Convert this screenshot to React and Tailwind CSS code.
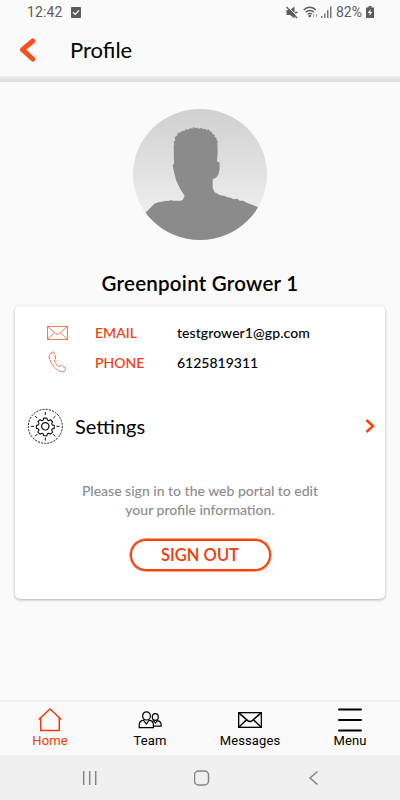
const tabs = [
    { name: 'Home', icon: HomeIcon, active: true },
    { name: 'Team', icon: TeamIcon },
    { name: 'Messages', icon: MessagesIcon },
    { name: 'Menu', icon: MenuIcon },
];

export default function App() {
    return (
        <div className="w-[400px] h-[800px] flex flex-col overflow-hidden bg-[#fafafa] text-black font-['Lato',sans-serif]">
            <StatusBar />
            <Header />
            <main className="flex-1 flex flex-col items-center px-[15px] pt-[27px]">
                <Avatar />
                <h1 className="mt-[29px] h-7 leading-7 text-[20.5px] font-semibold whitespace-nowrap tracking-[0.24px]">Greenpoint Grower 1</h1>
                <ProfileCard />
            </main>
            <TabBar />
            <SystemNav />
        </div>
    );
}

function StatusBar() {
    return (
        <div className="h-6 shrink-0 flex items-center pl-[27px] pr-[26px] text-[14px] text-[#5c5c5c] font-['Roboto',sans-serif]">
            <span className="tracking-[0.1px]">12:42</span>
            <svg className="ml-[9px] w-[10px] h-[11px]" viewBox="0 0 10 11">
                <rect width="10" height="11" rx="1" fill="#5c5c5c" />
                <path d="M2 5.2l2.2 2.2L8 3.4" fill="none" stroke="#fff" strokeWidth="1.3" />
            </svg>
            <svg className="ml-auto w-[12px] h-[13px]" viewBox="0 0 12 13">
                <path d="M0.5 4H4l4.5-3.500v12L4 9H0.500z" fill="#5c5c5c" />
                <path d="M1.8 0.5l10 10.5" stroke="#fafafa" strokeWidth="1" />
                <path d="M0.5 1l10.5 11M9 6.500h2.500" stroke="#5c5c5c" strokeWidth="1.3" />
            </svg>
            <svg className="ml-[5px] w-[16px] h-[12px]" viewBox="0 0 16 12" fill="none" stroke="#5c5c5c" strokeWidth="1.3">
                <path d="M0.700 4C4 0.300 9.500 0.300 12.800 4M2.700 6.300c2.200-2.400 6-2.400 8.200 0M4.700 8.400c1.200-1.300 3-1.300 4.200 0" />
                <circle cx="6.8" cy="10" r="0.7" fill="#5c5c5c" />
                <path d="M10.500 8v3M13.500 11V8" stroke="#a0a0a0" strokeWidth="1" />
            </svg>
            <svg className="ml-px w-[12px] h-[12px]" viewBox="0 0 12 12">
                <path d="M1 10h1.500v2H1zM4 7.500h1.500V12H4zM7 4h1.500v8H7zM10 0.500h1.500V12H10z" fill="#777" />
            </svg>
            <span className="ml-1">82%</span>
            <svg className="ml-1 w-[8px] h-[12px]" viewBox="0 0 8 12">
                <path d="M2.500 0h3v1.500H8V12H0V1.500h2.500z" fill="#5c5c5c" />
                <path d="M4.800 3L1.800 7h1.900l-.5 3 3-4H4.300z" fill="#fff" />
            </svg>
        </div>
    );
}

function Header() {
    return (
        <header className="h-[58px] shrink-0 flex flex-col">
            <div className="h-[52px] flex items-center pl-[19px]">
                <svg className="w-[17px] h-6" viewBox="0 0 17 24">
                    <path d="M13.800 3L3.500 11.600l10.300 9.400" fill="none" stroke="#f4511e" strokeWidth="5" strokeLinecap="round" strokeLinejoin="round" />
                </svg>
                <span className="ml-[34px] text-[22px] leading-[26px]">Profile</span>
            </div>
            <div className="h-[6px] bg-linear-to-b from-[#efefef] to-[#dcdcdc]" />
        </header>
    );
}

function Avatar() {
    return (
        <svg className="w-[134px] h-[131px] shrink-0" viewBox="39 27 402 393">
            <defs>
                <linearGradient id="sky" x1="0" y1="0" x2="0" y2="1">
                    <stop offset="0" stopColor="#d0d0d0" />
                    <stop offset="0.75" stopColor="#ececec" />
                </linearGradient>
                <clipPath id="round">
                    <ellipse cx="240" cy="223.5" rx="201" ry="196.5" />
                </clipPath>
            </defs>
            <g clipPath="url(#round)">
                <rect x="39" y="27" width="402" height="393" fill="url(#sky)" />
                <path
                    fill="#8b8b8b"
                    d="M39 360L78 337L103 311Q120 303 150 302L152 299L157 302L182 302L188 300L194 287L181 268L168 240L160 207L158 195L162 192L161 136L163 133L161 126L166 120L164 112L171 107L173 100L181 97L186 93L194 92L198 87L205 89L211 84L217 86L220 81L226 85L231 83L237 86L246 83L248 88L255 86L260 90L267 88L269 94L277 96L276 101L285 105L283 109L291 116L289 121L294 124L292 131L293 157L291 184L299 188L299 207L295 224L288 233L278 238L278 263L284 277L301 286L314 288L322 292L332 293L340 298L352 296L359 302L369 302L380 308L413 321L450 340V430H39Z"
                />
            </g>
        </svg>
    );
}

function ProfileCard() {
    return (
        <section className="mt-[9px] w-full h-[293px] flex flex-col rounded-[5px] bg-white shadow-[0_1px_3px_rgba(0,0,0,0.3)]">
            <div className="pt-[12px] text-[14px] font-medium">
                <div className="h-[29px] flex items-center">
                    <EnvelopeIcon className="ml-8 w-[21px] h-[14px] text-[#f4795a]" strokeWidth={1} />
                    <span className="ml-[27px] w-[82px] text-[#f4390c]">EMAIL</span>
                    <span className="tracking-[0.07px]">testgrower1@gp.com</span>
                </div>
                <div className="h-[30px] flex items-center">
                    <svg className="ml-[33px] w-[20px] h-[22px]" viewBox="0 0 20 22" fill="none" stroke="#f4694a" strokeWidth="1">
                        <path d="M4.500 1.200L1.800 2.800C0.700 4.500 1 7.500 2.500 10.500c2.200 4.500 5.800 8.200 9.800 9.800 2 .7 3.700.5 4.700-.7l.6-2.300-3.800-2.700c-1-.3-1.700 0-2.300 1.200-2-.8-4.700-4-5.200-6.700 1-.5 1.500-1 1.300-2L6.500 2.200c-.5-1-1.200-1.300-2-1z" strokeDasharray="4 0.6" />
                    </svg>
                    <span className="ml-[27px] w-[82px] text-[#f4390c]">PHONE</span>
                    <span>6125819311</span>
                </div>
            </div>
            <button className="mt-[31px] h-9 flex items-center pl-[12px] pr-[10px]">
                <GearIcon />
                <span className="ml-3 text-[20px]">Settings</span>
                <svg className="ml-auto w-[10px] h-[16px]" viewBox="0 0 10 16">
                    <path d="M1.500 2L8 8l-6.500 6" fill="none" stroke="#f4430c" strokeWidth="2.5" />
                </svg>
            </button>
            <p className="mt-[37px] text-center text-[14px] leading-[19px] font-medium text-[#8c8c8c]">
                Please sign in to the web portal to edit
                <br />
                your profile information.
            </p>
            <button className="mt-[20px] mx-auto w-[141px] h-[32px] pt-px rounded-full border-2 border-[#f4430c] shadow-[0_0_0_0.5px_#f4430c] text-[16.5px] leading-none text-[#f4390c] font-semibold">
                SIGN OUT
            </button>
        </section>
    );
}

function TabBar() {
    return (
        <nav className="h-[55px] shrink-0 flex border-t-2 border-[#f1f1f1] font-['Roboto',sans-serif]">
            {tabs.map(({ name, icon: Icon, active }) => (
                <a key={name} className={active ? 'w-[100px] flex flex-col items-center text-[#f4390c]' : 'w-[100px] flex flex-col items-center'}>
                    <span className="mt-[5px] h-[26px] flex items-center">
                        <Icon />
                    </span>
                    <span className="text-[13px] leading-4 tracking-[0.1px]">{name}</span>
                </a>
            ))}
        </nav>
    );
}

function SystemNav() {
    return (
        <div className="h-[45px] shrink-0 flex items-center bg-[#f0f0f0] pl-[82px] gap-[96px]">
            <svg className="w-4 h-4" viewBox="0 0 16 16" stroke="#858585" strokeWidth="1.5">
                <path d="M1.700 1v14M7.700 1v14M13.700 1v14" />
            </svg>
            <svg className="w-4 h-4" viewBox="0 0 16 16" fill="none" stroke="#858585" strokeWidth="1.5">
                <rect x="0.5" y="1" width="14" height="14" rx="4" />
            </svg>
            <svg className="w-4 h-4" viewBox="0 0 16 16" fill="none" stroke="#858585" strokeWidth="1.5">
                <path d="M11.500 1.500L4 8l7.500 6.500" />
            </svg>
        </div>
    );
}

function EnvelopeIcon({ className, strokeWidth }) {
    return (
        <svg className={className} viewBox="0 0 21 14" preserveAspectRatio="none" fill="none" stroke="currentColor" strokeWidth={strokeWidth}>
            <rect x="0.5" y="0.5" width="20" height="13" />
            <path d="M0.500 0.500L8.500 7.500q2 1.600 4 0L20.500 0.500M0.500 13.500L7.500 6.800M20.500 13.500L13.500 6.800" />
        </svg>
    );
}

function GearIcon() {
    return (
        <svg className="w-9 h-9" viewBox="-18 -18 36 36" fill="none" stroke="#111" strokeWidth="1.2">
            <circle cx="0.3" cy="0.3" r="17" strokeDasharray="2 1.2" strokeWidth="1" />
            <path d="M0.300-14v3M0.300 11.500v3M-14 0.300h3M11.500 0.300h3M-10-10l2.200 2.200M8.200 8.200l2.200 2.200M-10 10.400l2.200-2.200M8.200-7.800l2.200-2.200" strokeWidth="1" />
            <circle cx="0.3" cy="0.3" r="3.7" />
            <path
                d="M-1.700-8.500h3.400l.6 2.200 1.400.6 2-1.100 2.300 2.300-1.100 2 .6 1.400 2.200.6v3.200l-2.200.6-.6 1.400 1.100 2-2.300 2.300-2-1.100-1.400.6-.6 2.200h-3.400l-.6-2.200-1.400-.6-2 1.100-2.300-2.300 1.100-2-.6-1.400-2.200-.6v-3.200l2.200-.6.6-1.400-1.100-2 2.300-2.300 2 1.100 1.400-.6z"
                transform="translate(0.3 -0.1) scale(0.92)"
                strokeLinejoin="round"
            />
        </svg>
    );
}

function HomeIcon() {
    return (
        <svg className="w-6 h-6" viewBox="0 0 24 24" fill="none" stroke="currentColor" strokeWidth="1.5">
            <path d="M0.700 11.500L12 1 23.300 11.500M2.700 10V22.500h18.600V10" />
        </svg>
    );
}

function TeamIcon() {
    return (
        <svg className="w-6 h-[18px]" viewBox="0 0 24 18" fill="none" stroke="currentColor" strokeWidth="1.2">
            <ellipse cx="8.5" cy="4.9" rx="3.9" ry="4.1" />
            <path d="M5.500 9.200Q1.200 10.200 1.200 13.500v3.200h14.200v-3.200q0-3.300-4.200-4.300L8.300 13z" />
            <ellipse cx="17.3" cy="6" rx="3" ry="3.3" />
            <path d="M14.500 10.300l1.200-.6 1.700 2.400 1.800-2.400q3.900.8 3.900 3.800v1.700h-7" />
        </svg>
    );
}

function MessagesIcon() {
    return <EnvelopeIcon className="w-6 h-4" strokeWidth={1.3} />;
}

function MenuIcon() {
    return (
        <svg className="w-6 h-6" viewBox="0 0 24 24" stroke="currentColor" strokeWidth="2" strokeLinecap="round">
            <path d="M1 1.500h22M1 12h22M1 22.500h22" />
        </svg>
    );
}
